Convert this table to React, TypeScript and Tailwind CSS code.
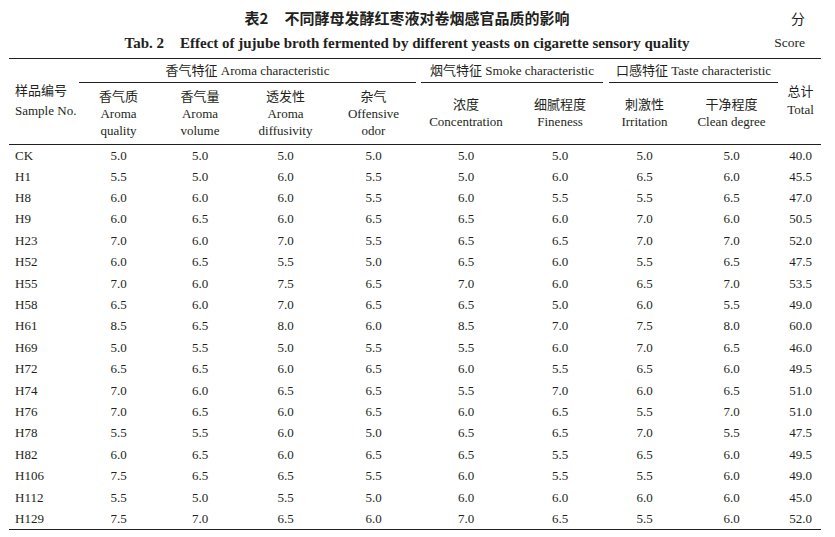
const rows: string[][] = [
  ["CK", "5.0", "5.0", "5.0", "5.0", "5.0", "5.0", "5.0", "5.0", "40.0"],
  ["H1", "5.5", "5.0", "6.0", "5.5", "5.0", "6.0", "6.5", "6.0", "45.5"],
  ["H8", "6.0", "6.0", "6.0", "5.5", "6.0", "5.5", "5.5", "6.5", "47.0"],
  ["H9", "6.0", "6.5", "6.0", "6.5", "6.5", "6.0", "7.0", "6.0", "50.5"],
  ["H23", "7.0", "6.0", "7.0", "5.5", "6.5", "6.5", "7.0", "7.0", "52.0"],
  ["H52", "6.0", "6.5", "5.5", "5.0", "6.5", "6.0", "5.5", "6.5", "47.5"],
  ["H55", "7.0", "6.0", "7.5", "6.5", "7.0", "6.0", "6.5", "7.0", "53.5"],
  ["H58", "6.5", "6.0", "7.0", "6.5", "6.5", "5.0", "6.0", "5.5", "49.0"],
  ["H61", "8.5", "6.5", "8.0", "6.0", "8.5", "7.0", "7.5", "8.0", "60.0"],
  ["H69", "5.0", "5.5", "5.0", "5.5", "5.5", "6.0", "7.0", "6.5", "46.0"],
  ["H72", "6.5", "6.5", "6.0", "6.5", "6.0", "5.5", "6.5", "6.0", "49.5"],
  ["H74", "7.0", "6.0", "6.5", "6.5", "5.5", "7.0", "6.0", "6.5", "51.0"],
  ["H76", "7.0", "6.5", "6.0", "6.5", "6.0", "6.5", "5.5", "7.0", "51.0"],
  ["H78", "5.5", "5.5", "6.0", "5.0", "6.5", "6.5", "7.0", "5.5", "47.5"],
  ["H82", "6.0", "6.5", "6.0", "6.5", "6.5", "5.5", "6.5", "6.0", "49.5"],
  ["H106", "7.5", "6.5", "6.5", "5.5", "6.0", "5.5", "5.5", "6.0", "49.0"],
  ["H112", "5.5", "5.0", "5.5", "5.0", "6.0", "6.0", "6.0", "6.0", "45.0"],
  ["H129", "7.5", "7.0", "6.5", "6.0", "7.0", "6.5", "5.5", "6.0", "52.0"],
];

const widths = [70, 79, 84, 87, 89, 96, 92, 77, 97, 41];

const subHeads = [
  ["香气质", "Aroma", "quality"],
  ["香气量", "Aroma", "volume"],
  ["透发性", "Aroma", "diffusivity"],
  ["杂气", "Offensive", "odor"],
  ["浓度", "Concentration"],
  ["细腻程度", "Fineness"],
  ["刺激性", "Irritation"],
  ["干净程度", "Clean degree"],
];

const serif = "font-['Liberation_Serif','Noto_Sans_CJK_SC',serif]";

export default function App() {
  return (
    <div className={`w-[835px] h-[537px] bg-white text-[#231f20] ${serif} overflow-hidden`}>
      {/* caption */}
      <div className="ml-[9px] mr-[30px] pt-[7px]">
        <div className="grid grid-cols-[1fr_auto_1fr] items-center h-[22px]">
          <div />
          <div className="font-['Noto_Sans_CJK_SC',sans-serif] font-bold text-[15px] leading-[22px] whitespace-nowrap">
            表2<span className="inline-block w-[16px]" />不同酵母发酵红枣液对卷烟感官品质的影响
          </div>
          <div className="justify-self-end font-['Noto_Sans_CJK_SC',sans-serif] text-[14px] leading-[22px]">分</div>
        </div>
        <div className="grid grid-cols-[1fr_auto_1fr] items-center h-[26px] mt-[1px]">
          <div />
          <div className="font-bold text-[15px] whitespace-nowrap">
            Tab. 2<span className="inline-block w-[16px]" />Effect of jujube broth fermented by different yeasts on cigarette sensory quality
          </div>
          <div className="justify-self-end text-[13.5px]">Score</div>
        </div>
      </div>

      <table className="ml-[9px] mt-[2px] w-[812px] table-fixed border-collapse text-[13px] border-t border-b border-[#231f20]">
        <colgroup>
          {widths.map((w, i) => (
            <col key={i} style={{ width: w }} />
          ))}
        </colgroup>
        <thead>
          <tr>
            <th rowSpan={2} className="p-0 pl-[6px] text-left align-middle font-normal leading-[18px] border-b border-[#231f20]">
              <div className="pb-[2px]">样品编号</div>
              <div>Sample No.</div>
            </th>
            <th colSpan={4} className="p-0 font-normal align-bottom">
              <div className="mr-[2px] h-[24px] flex items-center justify-center border-b border-[#231f20]">
                香气特征 Aroma characteristic
              </div>
            </th>
            <th colSpan={2} className="p-0 font-normal align-bottom">
              <div className="ml-[3px] mr-[3px] h-[24px] flex items-center justify-center border-b border-[#231f20]">
                烟气特征 Smoke characteristic
              </div>
            </th>
            <th colSpan={2} className="p-0 font-normal align-bottom">
              <div className="ml-[3px] mr-[2px] h-[24px] flex items-center justify-center border-b border-[#231f20] whitespace-nowrap">
                口感特征 Taste characteristic
              </div>
            </th>
            <th rowSpan={2} className="p-0 font-normal align-middle leading-[18px] border-b border-[#231f20]">
              <div>总计</div>
              <div>Total</div>
            </th>
          </tr>
          <tr className="h-[61px] border-b border-[#231f20]">
            {subHeads.map((lines, i) => (
              <th key={i} className="p-0 font-normal align-middle leading-[17px] whitespace-nowrap">
                {lines.map((l, j) => (
                  <div key={j}>{l}</div>
                ))}
              </th>
            ))}
          </tr>
        </thead>
        <tbody>
          {rows.map((r, ri) => (
            <tr key={ri} className="h-[21.4px]">
              {r.map((v, ci) => (
                <td key={ci} className={`p-0 leading-[21px] ${ci === 0 ? "text-left pl-[6px]" : "text-center"}`}>
                  {v}
                </td>
              ))}
            </tr>
          ))}
        </tbody>
      </table>
    </div>
  );
}
